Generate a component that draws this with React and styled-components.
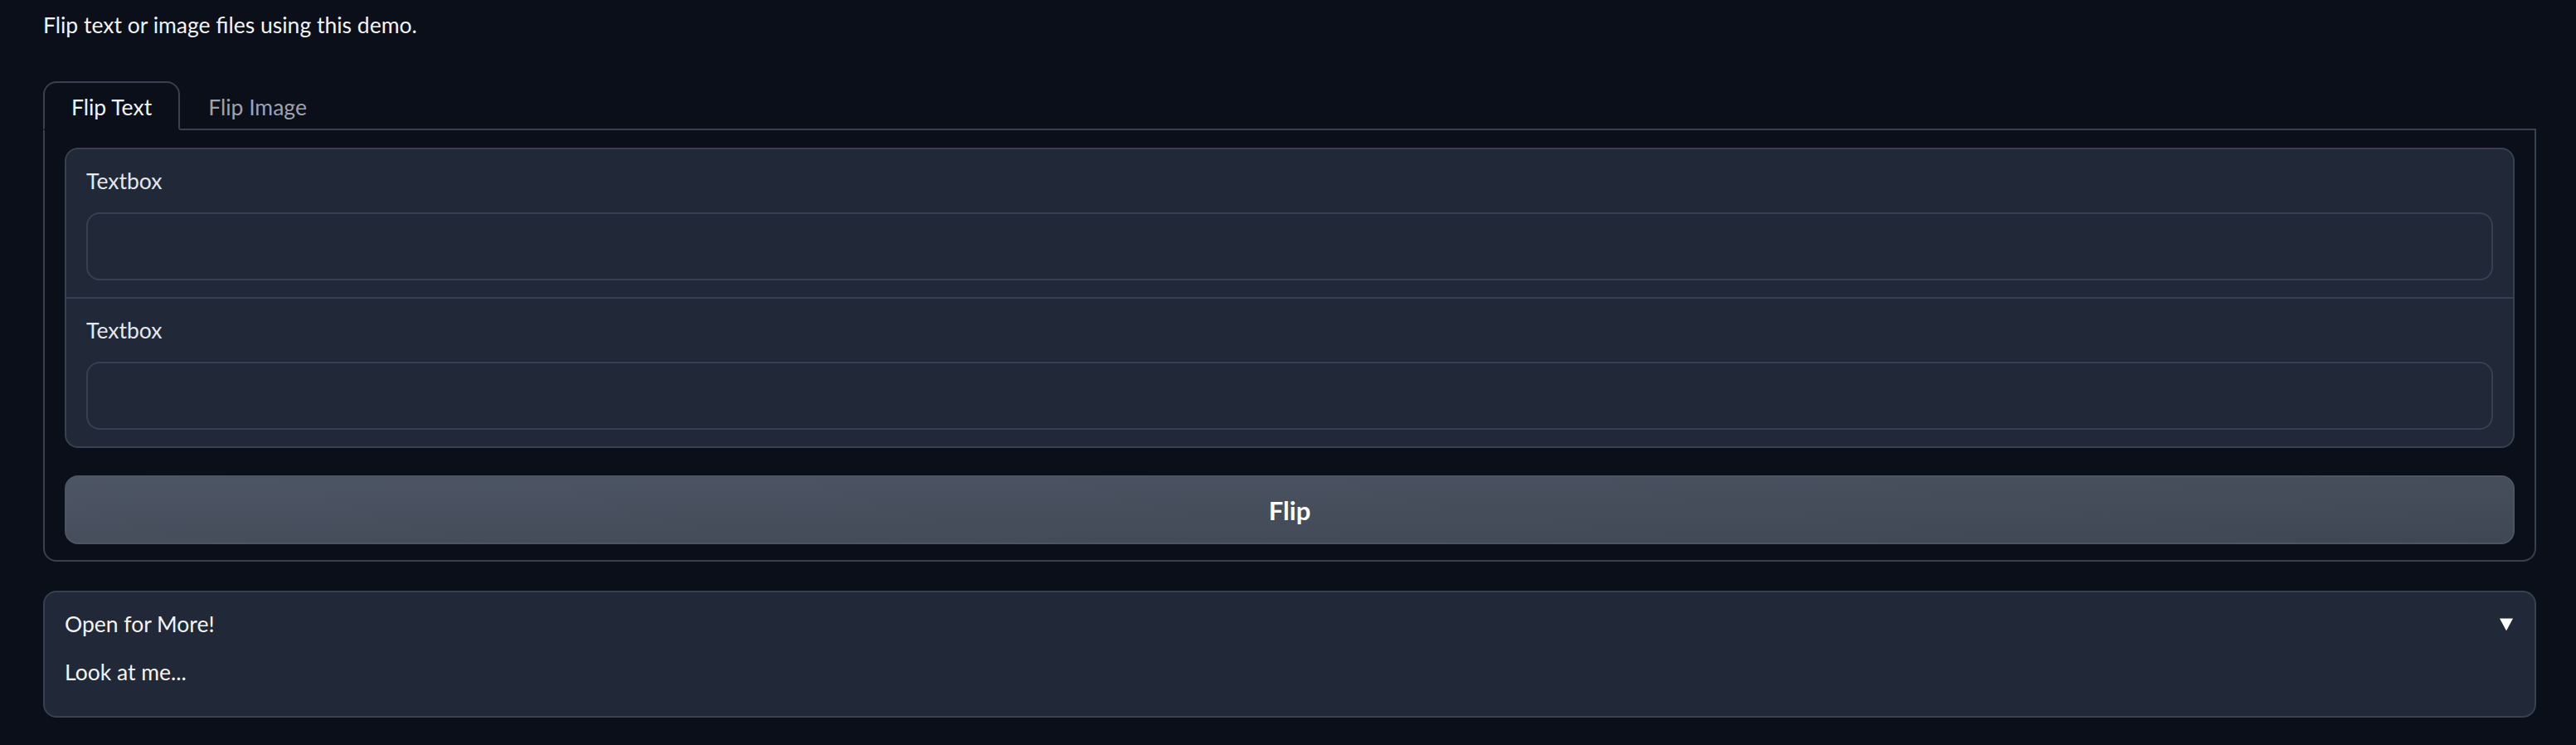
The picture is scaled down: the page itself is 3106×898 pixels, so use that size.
import React, { useState } from "react";
import styled, { createGlobalStyle, css } from "styled-components";

const GlobalStyle = createGlobalStyle`
  html, body {
    margin: 0;
    padding: 0;
    background: #0b0f19;
  }
  body {
    font-family: Lato, "Noto Sans", sans-serif;
    font-size: 26.5px;
    color: #f3f4f6;
    min-height: 898px;
  }
  * { box-sizing: border-box; }
`;

const Page = styled.main`
  padding: 10px 48px 0 52px;
  display: flex;
  flex-direction: column;
`;

const Description = styled.p`
  margin: 0 0 48px;
  line-height: 40px;
  color: #f3f4f6;
`;

const TabNav = styled.div`
  display: flex;
  align-items: flex-end;
`;

const TabButton = styled.button`
  font: inherit;
  line-height: 40px;
  padding: 9px 32px 6px;
  margin: 0 0 -2px;
  background: transparent;
  color: #9ca3af;
  border: 2px solid transparent;
  border-radius: 16px 16px 0 0;
  cursor: pointer;
  position: relative;
  z-index: 1;
  ${(p) =>
    p.$active &&
    css`
      color: #f3f4f6;
      background: #0b0f19;
      border-color: #374151;
      border-bottom-color: #0b0f19;
    `}
`;

const TabPanel = styled.section`
  border: 2px solid #374151;
  border-radius: 0 0 16px 16px;
  padding: 21px 24px 19px;
  display: flex;
  flex-direction: column;
  gap: 33px;
`;

const Form = styled.div`
  background: #212837;
  border: 2px solid #374151;
  border-radius: 16px;
  overflow: hidden;
`;

const Block = styled.label`
  display: flex;
  flex-direction: column;
  padding: 20px 24px;
  & + & {
    border-top: 2px solid #374151;
  }
`;

const Label = styled.span`
  line-height: 36px;
  color: #e5e7eb;
  margin-bottom: 20px;
`;

const TextArea = styled.textarea`
  display: block;
  width: 100%;
  height: 82px;
  resize: none;
  font: inherit;
  line-height: 40px;
  padding: 19px 22px;
  color: #f3f4f6;
  background: #212837;
  border: 2px solid #374151;
  border-radius: 16px;
  outline: none;
`;

const Button = styled.button`
  height: 83px;
  width: 100%;
  font-family: inherit;
  font-size: 31px;
  font-weight: 700;
  color: #ffffff;
  background: linear-gradient(to bottom right, #4d5664, #3f4654);
  border: 2px solid #4b5563;
  border-radius: 16px;
  cursor: pointer;
`;

const Accordion = styled.div`
  margin-top: 35px;
  background: #212837;
  border: 2px solid #374151;
  border-radius: 16px;
  padding: 20px 24px 35px;
`;

const AccordionHeader = styled.button`
  display: flex;
  width: 100%;
  align-items: center;
  justify-content: space-between;
  padding: 0;
  background: none;
  border: none;
  font: inherit;
  line-height: 36px;
  color: #f3f4f6;
  cursor: pointer;
  text-align: left;
`;

const Caret = styled.svg`
  width: 18px;
  height: 18px;
  flex: none;
  margin-right: 1px;
  transform: ${(p) => (p.$open ? "none" : "rotate(90deg)")};
`;

const AccordionBody = styled.div`
  margin-top: 22px;
  line-height: 36px;
  color: #f3f4f6;
`;

export default function App() {
  const [tab, setTab] = useState(0);
  const [open, setOpen] = useState(true);
  const [a, setA] = useState("");
  const b = a.split("").reverse().join("");

  return (
    <>
      <GlobalStyle />
      <Page>
        <Description>Flip text or image files using this demo.</Description>
        <TabNav>
          <TabButton $active={tab === 0} onClick={() => setTab(0)}>
            Flip Text
          </TabButton>
          <TabButton $active={tab === 1} onClick={() => setTab(1)}>
            Flip Image
          </TabButton>
        </TabNav>
        <TabPanel>
          <Form>
            <Block>
              <Label>Textbox</Label>
              <TextArea value={a} onChange={(e) => setA(e.target.value)} />
            </Block>
            <Block>
              <Label>Textbox</Label>
              <TextArea value={b} readOnly />
            </Block>
          </Form>
          <Button>Flip</Button>
        </TabPanel>
        <Accordion>
          <AccordionHeader onClick={() => setOpen(!open)}>
            <span>Open for More!</span>
            <Caret viewBox="0 0 18 18" $open={open}>
              <path d="M1 2.5 L17 2.5 L9.6 16.2 Q9 17.2 8.4 16.2 Z" fill="#ffffff" />
            </Caret>
          </AccordionHeader>
          {open && <AccordionBody>Look at me...</AccordionBody>}
        </Accordion>
      </Page>
    </>
  );
}
